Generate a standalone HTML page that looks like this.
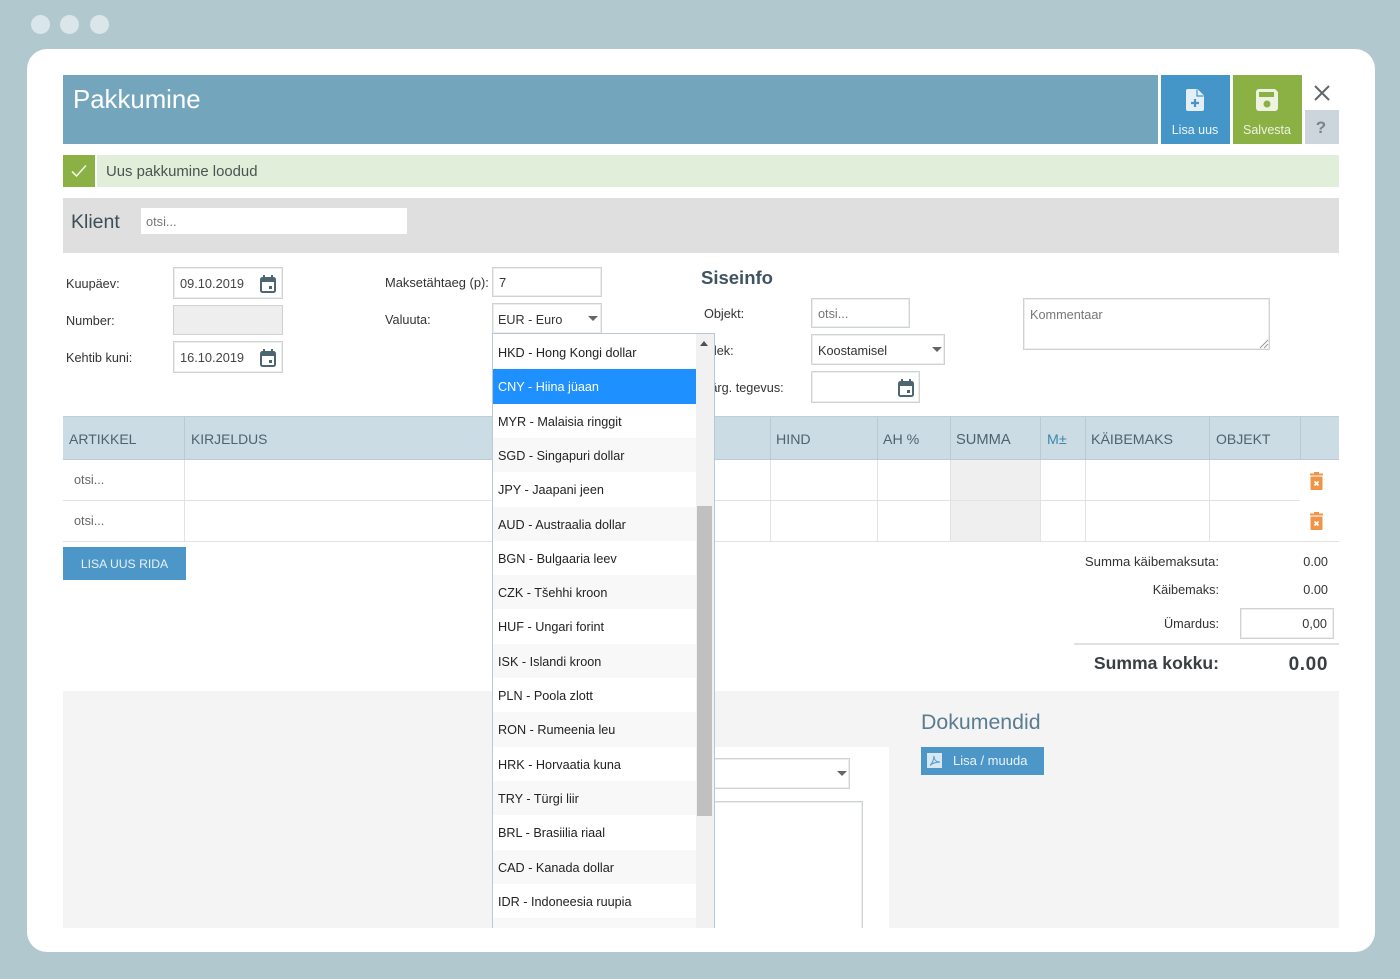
<!DOCTYPE html>
<html lang="et">
<head>
<meta charset="utf-8">
<title>Pakkumine</title>
<style>
html,body{margin:0;padding:0}
body{position:relative;width:1400px;height:979px;overflow:hidden;background:#b1c8cf;font-family:"Liberation Sans",sans-serif;color:#333}
div,span.a,svg{position:absolute}
.b{box-sizing:border-box}
.t{white-space:nowrap;line-height:20px;height:20px;font-size:12.700px;color:#333}
.r{text-align:right}
.inp{box-sizing:border-box;background:#fff;border:1px solid #cfd3d3;box-shadow:inset 0 0 0 1px #eceeee}
.dot{width:19px;height:19px;border-radius:50%;background:#dae6ea;top:15px}
.th{top:430px;font-size:14.200px;color:#4d636e}
.v{width:1px;background:#b9cad1;top:417px;height:43px}
.w{width:1px;background:#e1e3e3;top:460px;height:81px}
.i{left:493px;width:203px;height:34.300px;background:#fff;box-sizing:border-box;padding-left:5px;font-size:12.650px;line-height:36px;color:#222;white-space:nowrap}
.g{background:#f8f8f8}
.arr{width:0;height:0;border-left:5px solid transparent;border-right:5px solid transparent;border-top:5px solid #666}
</style>
</head>
<body>
<div class="dot" style="left:31px"></div>
<div class="dot" style="left:60px"></div>
<div class="dot" style="left:90px"></div>
<div style="left:27px;top:49px;width:1348px;height:903px;background:#fff;border-radius:20px"></div>

<!-- header -->
<div style="left:63px;top:75px;width:1095px;height:69px;background:#73a6bd"></div>
<div class="t" style="left:73px;top:85px;font-size:25.800px;line-height:30px;height:30px;color:#fff">Pakkumine</div>
<div style="left:1161px;top:75px;width:69px;height:69px;background:#4496c8"></div>
<svg style="left:1186px;top:89px" width="18" height="22" viewBox="0 0 18 22"><path d="M2 0H11.500L18 6.500V20a2 2 0 0 1-2 2H2a2 2 0 0 1-2-2V2a2 2 0 0 1 2-2Z" fill="#e3eef5"/><path d="M11 .5V7H17.500" fill="none" stroke="#4496c8" stroke-width="1.200"/><path d="M9 10V18M5 14H13" stroke="#4496c8" stroke-width="2.200"/></svg>
<div class="t" style="left:1161px;width:68px;top:120px;text-align:center;color:#eef5f9;font-size:12.500px">Lisa uus</div>
<div style="left:1233px;top:75px;width:69px;height:69px;background:#8bb043"></div>
<svg style="left:1256px;top:89px" width="22" height="22" viewBox="0 0 22 22"><path d="M3 0H19L22 3V19a3 3 0 0 1-3 3H3a3 3 0 0 1-3-3V3a3 3 0 0 1 3-3Z" fill="#edf3e0"/><rect x="3" y="3" width="15" height="5" fill="#8bb043"/><circle cx="11" cy="15" r="3.500" fill="#8bb043"/></svg>
<div class="t" style="left:1233px;width:68px;top:120px;text-align:center;color:#eef3e2;font-size:12.500px">Salvesta</div>
<svg style="left:1314px;top:85px" width="16" height="16" viewBox="0 0 16 16"><path d="M1 1L15 15M15 1L1 15" stroke="#60676b" stroke-width="2"/></svg>
<div style="left:1305px;top:110px;width:34px;height:34px;background:#ccd4dc"></div>
<div class="t" style="left:1304px;width:34px;top:118px;text-align:center;font-size:17px;font-weight:bold;color:#78838c">?</div>

<!-- success -->
<div style="left:63px;top:155px;width:32px;height:32px;background:#8bb043"></div>
<svg style="left:71px;top:164px" width="16" height="14" viewBox="0 0 16 14"><path d="M1 7.500L5.500 12L15 1.500" fill="none" stroke="#eef5e2" stroke-width="1.600"/></svg>
<div style="left:97px;top:155px;width:1242px;height:32px;background:#e1eeda"></div>
<div class="t" style="left:106px;top:162px;font-size:14.900px;color:#4a5450">Uus pakkumine loodud</div>

<!-- klient -->
<div style="left:63px;top:198px;width:1276px;height:55px;background:#dfdfdf"></div>
<div class="t" style="left:71px;top:212px;font-size:19.500px;color:#3e4e58">Klient</div>
<div style="left:141px;top:208px;width:266px;height:26px;background:#fff"></div>
<div class="t" style="left:146px;top:212px;font-size:12.800px;color:#777">otsi...</div>

<!-- left form -->
<div class="t" style="left:66px;top:274px">Kuupäev:</div>
<div class="t" style="left:66px;top:311px">Number:</div>
<div class="t" style="left:66px;top:348px">Kehtib kuni:</div>
<div class="inp" style="left:173px;top:267px;width:110px;height:32px"></div>
<div class="t" style="left:180px;top:274px;color:#444;font-size:12.800px">09.10.2019</div>
<div class="inp" style="left:173px;top:305px;width:110px;height:30px;background:#eee"></div>
<div class="inp" style="left:173px;top:341px;width:110px;height:32px"></div>
<div class="t" style="left:180px;top:348px;color:#444;font-size:12.800px">16.10.2019</div>
<svg style="left:260px;top:275px" width="16" height="18" viewBox="0 0 16 18"><path d="M4 0V3M12 0V3" stroke="#4c6672" stroke-width="2"/><rect x="1" y="3" width="14" height="14" rx="1.500" fill="none" stroke="#4c6672" stroke-width="2"/><rect x="1" y="3" width="14" height="4" fill="#4c6672"/><rect x="9" y="11" width="3" height="3" fill="#4c6672"/></svg>
<svg style="left:260px;top:349px" width="16" height="18" viewBox="0 0 16 18"><path d="M4 0V3M12 0V3" stroke="#4c6672" stroke-width="2"/><rect x="1" y="3" width="14" height="14" rx="1.500" fill="none" stroke="#4c6672" stroke-width="2"/><rect x="1" y="3" width="14" height="4" fill="#4c6672"/><rect x="9" y="11" width="3" height="3" fill="#4c6672"/></svg>

<!-- middle form -->
<div class="t" style="left:385px;top:273px;font-size:12.900px">Maksetähtaeg (p):</div>
<div class="t" style="left:385px;top:310px">Valuuta:</div>
<div class="inp" style="left:492px;top:267px;width:110px;height:30px"></div>
<div class="t" style="left:499px;top:273px;font-size:13px">7</div>
<div class="inp" style="left:492px;top:303px;width:110px;height:31px;border-bottom-color:#e2c48a"></div>
<div class="t" style="left:498px;top:310px;font-size:12.600px">EUR - Euro</div>
<div class="arr" style="left:588px;top:316px"></div>

<!-- siseinfo -->
<div class="t" style="left:701px;top:268px;font-size:18.500px;font-weight:bold;color:#3f5360">Siseinfo</div>
<div class="t" style="left:704px;top:304px">Objekt:</div>
<div class="t" style="left:704px;top:341px">Olek:</div>
<div class="t" style="left:704px;top:378px">Järg. tegevus:</div>
<div class="inp" style="left:811px;top:298px;width:99px;height:30px"></div>
<div class="t" style="left:818px;top:304px;color:#777">otsi...</div>
<div class="inp" style="left:811px;top:334px;width:134px;height:31px"></div>
<div class="t" style="left:818px;top:341px">Koostamisel</div>
<div class="arr" style="left:932px;top:347px"></div>
<div class="inp" style="left:811px;top:371px;width:109px;height:32px"></div>
<svg style="left:898px;top:379px" width="16" height="18" viewBox="0 0 16 18"><path d="M4 0V3M12 0V3" stroke="#4c6672" stroke-width="2"/><rect x="1" y="3" width="14" height="14" rx="1.500" fill="none" stroke="#4c6672" stroke-width="2"/><rect x="1" y="3" width="14" height="4" fill="#4c6672"/><rect x="9" y="11" width="3" height="3" fill="#4c6672"/></svg>
<div class="inp" style="left:1023px;top:298px;width:247px;height:52px"></div>
<div class="t" style="left:1030px;top:305px;color:#777">Kommentaar</div>
<svg style="left:1259px;top:339px" width="10" height="10" viewBox="0 0 10 10"><path d="M1 9L9 1M5 9L9 5" stroke="#999" stroke-width="1"/></svg>

<!-- table -->
<div style="left:63px;top:416px;width:1276px;height:44px;background:#cbdce4;border-top:1px solid #c2ced3;border-bottom:1px solid #bccbd2;box-sizing:border-box"></div>
<div class="v" style="left:184px"></div>
<div class="v" style="left:770px"></div>
<div class="v" style="left:877px"></div>
<div class="v" style="left:950px"></div>
<div class="v" style="left:1040px"></div>
<div class="v" style="left:1085px"></div>
<div class="v" style="left:1209px"></div>
<div class="v" style="left:1300px"></div>
<div class="t th" style="left:69px;top:429px;font-size:14px">ARTIKKEL</div>
<div class="t th" style="left:191px;top:429px;font-size:13.900px">KIRJELDUS</div>
<div class="t th" style="left:776px">HIND</div>
<div class="t th" style="left:883px">AH %</div>
<div class="t th" style="left:956px;font-size:14.700px">SUMMA</div>
<div class="t th" style="left:1047px;color:#3d87ad">M±</div>
<div class="t th" style="left:1091px">KÄIBEMAKS</div>
<div class="t th" style="left:1216px;top:429px;font-size:14px">OBJEKT</div>
<div style="left:951px;top:460px;width:89px;height:81px;background:#efefef"></div>
<div class="w" style="left:184px"></div>
<div class="w" style="left:770px"></div>
<div class="w" style="left:877px"></div>
<div class="w" style="left:950px"></div>
<div class="w" style="left:1040px"></div>
<div class="w" style="left:1085px"></div>
<div class="w" style="left:1209px"></div>
<div style="left:63px;top:500px;width:1237px;height:1px;background:#e1e3e3"></div>
<div style="left:63px;top:541px;width:1276px;height:1px;background:#e1e3e3"></div>
<div class="t" style="left:74px;top:470px;color:#666">otsi...</div>
<div class="t" style="left:74px;top:511px;color:#666">otsi...</div>
<svg style="left:1310px;top:472px" width="13" height="18" viewBox="0 0 13 18"><path d="M4 0H9V1.500H13V3.500H0V1.500H4Z" fill="#ef9448"/><path d="M.5 4.500H12.500V17a1 1 0 0 1-1 1H1.500a1 1 0 0 1-1-1Z" fill="#ef9448"/><path d="M4.500 9.500L8.500 13.500M8.500 9.500L4.500 13.500" stroke="#fff" stroke-width="1.600"/></svg>
<svg style="left:1310px;top:512px" width="13" height="18" viewBox="0 0 13 18"><path d="M4 0H9V1.500H13V3.500H0V1.500H4Z" fill="#ef9448"/><path d="M.5 4.500H12.500V17a1 1 0 0 1-1 1H1.500a1 1 0 0 1-1-1Z" fill="#ef9448"/><path d="M4.500 9.500L8.500 13.500M8.500 9.500L4.500 13.500" stroke="#fff" stroke-width="1.600"/></svg>

<div style="left:63px;top:547px;width:123px;height:33px;background:#4d97c8"></div>
<div class="t" style="left:63px;width:123px;top:554px;text-align:center;font-size:12.200px;color:#e6f1f7">LISA UUS RIDA</div>

<!-- totals -->
<div class="t r" style="left:1019px;width:200px;top:552px;font-size:13.200px">Summa käibemaksuta:</div>
<div class="t r" style="left:1019px;width:200px;top:580px">Käibemaks:</div>
<div class="t r" style="left:1019px;width:200px;top:614px">Ümardus:</div>
<div class="t r" style="left:1268px;width:60px;top:552px">0.00</div>
<div class="t r" style="left:1268px;width:60px;top:580px">0.00</div>
<div class="inp" style="left:1240px;top:608px;width:94px;height:31px"></div>
<div class="t r" style="left:1267px;width:60px;top:614px">0,00</div>
<div style="left:1074px;top:643px;width:265px;height:2px;background:#dfe1e1"></div>
<div class="t r" style="left:1019px;width:200px;top:653px;font-size:17.600px;font-weight:bold;color:#3a3f42">Summa kokku:</div>
<div class="t r" style="left:1248px;width:80px;top:655px;font-size:19px;font-weight:bold;color:#3a3f42;letter-spacing:.6px">0.00</div>

<!-- bottom panel -->
<div style="left:63px;top:691px;width:1276px;height:237px;background:#f4f4f4"></div>
<div style="left:700px;top:747px;width:189px;height:181px;background:#fff"></div>
<div class="inp" style="left:700px;top:758px;width:150px;height:31px"></div>
<div class="arr" style="left:837px;top:771px"></div>
<div class="b" style="left:700px;top:801px;width:163px;height:127px;background:#fff;border:1px solid #cfd3d3;border-bottom:0;box-shadow:inset 0 1px 0 #eceeee,inset -1px 0 0 #eceeee"></div>
<div class="t" style="left:921px;top:712px;font-size:21.300px;color:#5a7c90">Dokumendid</div>
<div style="left:921px;top:747px;width:123px;height:28px;background:#4d97c8"></div>
<div style="left:927px;top:753px;width:15px;height:15px;background:#d8e8f2"></div>
<svg style="left:927px;top:753px" width="15" height="15" viewBox="0 0 15 15"><path d="M3 12.500C5 11 7 6 7 3C7 6.500 9 9 13 9C9.500 9 5.500 10 3 12.500Z" fill="none" stroke="#4d97c8" stroke-width="1"/></svg>
<div class="t" style="left:953px;top:751px;color:#eaf3f8;font-size:13px">Lisa / muuda</div>

<!-- dropdown -->
<div style="left:492px;top:333px;width:223px;height:595px;background:#fff;border:1px solid #b5c9dc;border-bottom:0;box-sizing:border-box;overflow:hidden"></div>
<div class="i" style="top:335px">HKD - Hong Kongi dollar</div>
<div class="i" style="top:369.300px;background:#1e90ff;color:#fff">CNY - Hiina jüaan</div>
<div class="i" style="top:403.600px">MYR - Malaisia ringgit</div>
<div class="i g" style="top:437.900px">SGD - Singapuri dollar</div>
<div class="i" style="top:472.200px">JPY - Jaapani jeen</div>
<div class="i g" style="top:506.500px">AUD - Austraalia dollar</div>
<div class="i" style="top:540.800px">BGN - Bulgaaria leev</div>
<div class="i g" style="top:575.100px">CZK - Tšehhi kroon</div>
<div class="i" style="top:609.400px">HUF - Ungari forint</div>
<div class="i g" style="top:643.700px">ISK - Islandi kroon</div>
<div class="i" style="top:678px">PLN - Poola zlott</div>
<div class="i g" style="top:712.300px">RON - Rumeenia leu</div>
<div class="i" style="top:746.600px">HRK - Horvaatia kuna</div>
<div class="i g" style="top:780.900px">TRY - Türgi liir</div>
<div class="i" style="top:815.200px">BRL - Brasiilia riaal</div>
<div class="i g" style="top:849.500px">CAD - Kanada dollar</div>
<div class="i" style="top:883.800px">IDR - Indoneesia ruupia</div>
<div class="g" style="left:493px;top:918.100px;width:203px;height:9.900px"></div>
<div style="left:696px;top:334px;width:18px;height:594px;background:#f1f1f1"></div>
<div style="left:697px;top:506px;width:15px;height:310px;background:#c0c0c0"></div>
<div style="left:700px;top:341px;width:0;height:0;border-left:4.500px solid transparent;border-right:4.500px solid transparent;border-bottom:5px solid #505050"></div>
</body>
</html>
